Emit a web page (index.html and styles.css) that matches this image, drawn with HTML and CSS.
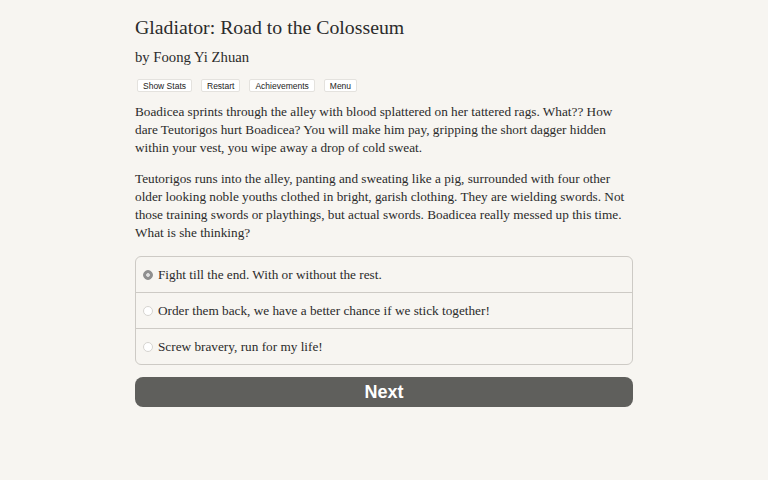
FILE: index.html
```html
<!DOCTYPE html>
<html>
<head>
<meta charset="utf-8">
<link rel="stylesheet" href="styles.css">
</head>
<body>
<div class="container">
  <h1 class="title">Gladiator: Road to the Colosseum</h1>
  <h2 class="author">by Foong Yi Zhuan</h2>
  <div class="buttons">
    <button class="small-btn">Show Stats</button>
    <button class="small-btn">Restart</button>
    <button class="small-btn">Achievements</button>
    <button class="small-btn">Menu</button>
  </div>
  <p class="text">Boadicea sprints through the alley with blood splattered on her tattered rags. What?? How dare Teutorigos hurt Boadicea? You will make him pay, gripping the short dagger hidden within your vest, you wipe away a drop of cold sweat.</p>
  <p class="text">Teutorigos runs into the alley, panting and sweating like a pig, surrounded with four other older looking noble youths clothed in bright, garish clothing. They are wielding swords. Not those training swords or playthings, but actual swords. Boadicea really messed up this time. What is she thinking?</p>
  <div class="choices">
    <label class="choice"><span class="radio checked"></span>Fight till the end. With or without the rest.</label>
    <label class="choice"><span class="radio"></span>Order them back, we have a better chance if we stick together!</label>
    <label class="choice"><span class="radio"></span>Screw bravery, run for my life!</label>
  </div>
  <button class="next">Next</button>
</div>
</body>
</html>
```
FILE: styles.css
```css
html, body {
  margin: 0;
  padding: 0;
  background: #f7f5f1;
}
body {
  font-family: "Liberation Serif", serif;
  color: #2b2b2b;
}
.container {
  width: 498px;
  margin: 0 auto;
  padding-top: 14px;
}
.title {
  font-weight: normal;
  font-size: 19.8px;
  margin: 0;
  line-height: 26px;
}
.author {
  font-weight: normal;
  font-size: 14.7px;
  margin: 6px 0 0;
  line-height: 22px;
}
.buttons {
  display: flex;
  gap: 9px;
  margin: 11px 0 0 2px;
}
.small-btn {
  font-family: "Liberation Sans", sans-serif;
  font-size: 8.5px;
  background: #fff;
  border: 1px solid #e4e2de;
  border-radius: 2px;
  padding: 1px 5px;
  height: 13px;
  line-height: 10px;
  color: #222;
}
.text {
  font-size: 13.25px;
  line-height: 18px;
  margin: 11px 0 0;
}
.text + .text {
  margin-top: 13px;
}
.choices {
  margin-top: 14px;
  border: 1px solid #cdcac5;
  border-radius: 6px;
  overflow: hidden;
}
.choice {
  display: flex;
  align-items: center;
  height: 35px;
  font-size: 13.25px;
  padding-left: 7px;
}
.choice + .choice {
  border-top: 1px solid #cdcac5;
}
.radio {
  width: 10px;
  height: 10px;
  border-radius: 50%;
  border: 1px solid #d6d4d0;
  background: #fff;
  margin-right: 5px;
  box-sizing: border-box;
}
.radio.checked {
  background: radial-gradient(circle, #e0e0e0 0 1.5px, #8f8f8f 2.2px);
  border-color: #8f8f8f;
}
.next {
  display: block;
  width: 100%;
  margin-top: 12px;
  height: 30px;
  border: none;
  border-radius: 8px;
  background: #5f5f5c;
  color: #fff;
  font-family: "Liberation Sans", sans-serif;
  font-weight: bold;
  font-size: 18px;
}
```
